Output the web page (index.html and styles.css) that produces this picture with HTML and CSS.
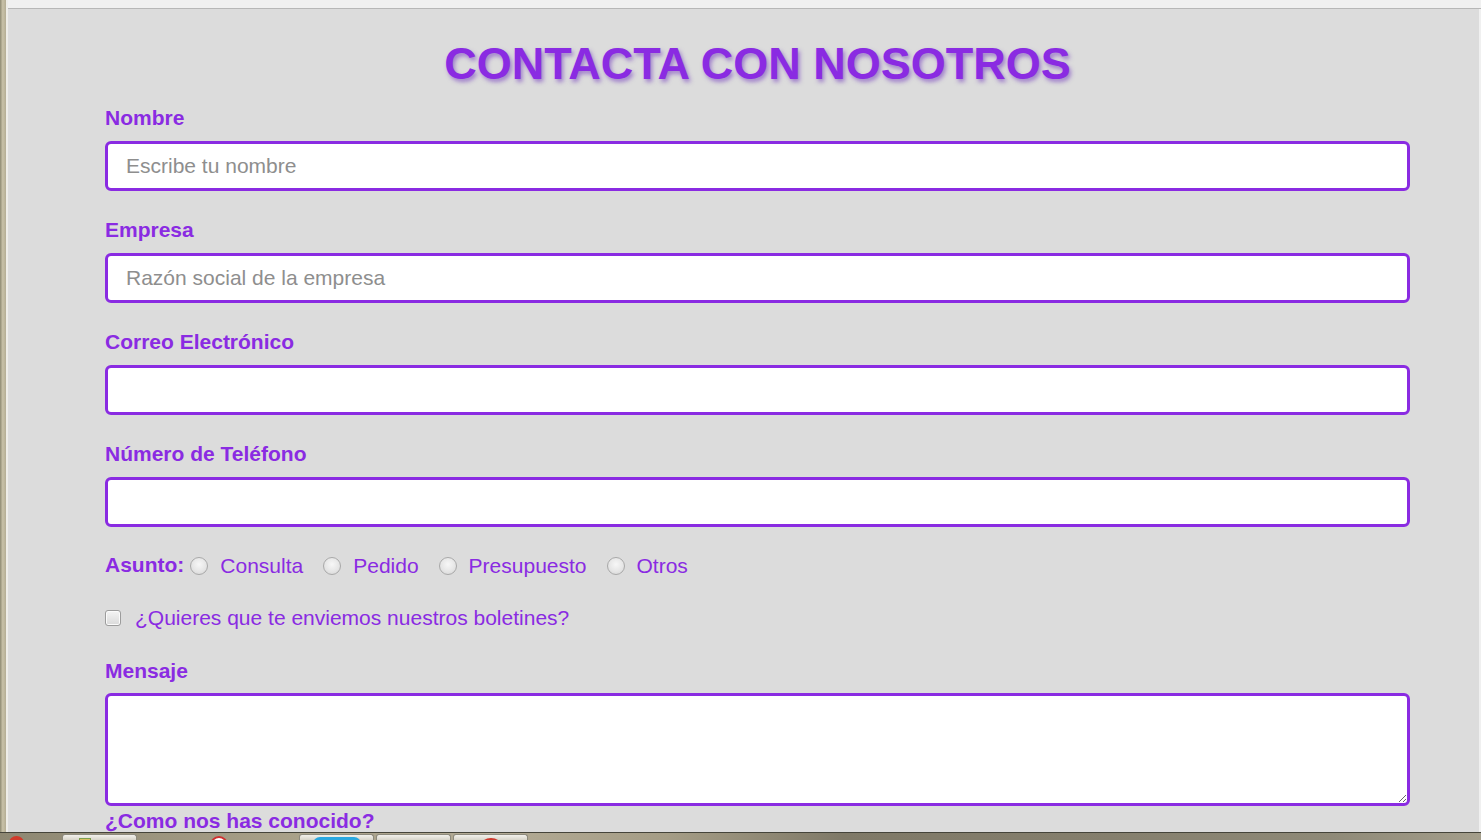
FILE: index.html
```html
<!DOCTYPE html>
<html lang="es">
<head>
<meta charset="utf-8">
<title>Contacta con nosotros</title>
<link rel="stylesheet" href="styles.css">
</head>
<body>
<div class="screen">
  <div class="desk-left"></div>
  <div class="window">
    <div class="chrome-top"></div>
    <div class="viewport">
      <div class="page">
        <form class="form">
          <h1 class="title">CONTACTA CON NOSOTROS</h1>

          <label class="field-label first" for="nombre">Nombre</label>
          <input class="text-input" id="nombre" type="text" placeholder="Escribe tu nombre">

          <label class="field-label" for="empresa">Empresa</label>
          <input class="text-input" id="empresa" type="text" placeholder="Razón social de la empresa">

          <label class="field-label" for="correo">Correo Electrónico</label>
          <input class="text-input" id="correo" type="email">

          <label class="field-label" for="tel">Número de Teléfono</label>
          <input class="text-input" id="tel" type="tel">

          <div class="radio-row">
            <span class="row-label">Asunto:</span>
            <label class="radio-item"><input class="radio" type="radio" name="asunto"><span class="opt-text">Consulta</span></label>
            <label class="radio-item"><input class="radio" type="radio" name="asunto"><span class="opt-text">Pedido</span></label>
            <label class="radio-item"><input class="radio" type="radio" name="asunto"><span class="opt-text">Presupuesto</span></label>
            <label class="radio-item"><input class="radio" type="radio" name="asunto"><span class="opt-text">Otros</span></label>
          </div>

          <label class="check-row"><input class="check" type="checkbox"><span class="check-text">¿Quieres que te enviemos nuestros boletines?</span></label>

          <label class="field-label msg" for="mensaje">Mensaje</label>
          <textarea class="text-area" id="mensaje"></textarea>

          <label class="field-label tail">¿Como nos has conocido?</label>
        </form>
      </div>
      <div class="scroll-edge"></div>
    </div>
  </div>
</div>
<div class="taskbar">
  <div class="tb-start"><span class="tb-icon red"></span></div>
  <div class="tb-btn"><span class="tb-icon folder"></span></div>
  <div class="tb-gap"><span class="tb-icon redwhite"></span></div>
  <div class="tb-btn"><span class="tb-icon blue"></span></div>
  <div class="tb-btn"></div>
  <div class="tb-btn"><span class="tb-icon red2"></span></div>
</div>
</body>
</html>
```
FILE: styles.css
```css
html, body {
  margin: 0;
  padding: 0;
}
body {
  width: 1481px;
  height: 840px;
  overflow: hidden;
  display: flex;
  flex-direction: column;
  font-family: "Liberation Sans", Arial, sans-serif;
  background: #dcdcdc;
}
.screen {
  height: 832px;
  display: flex;
  flex-direction: row;
}
.desk-left {
  width: 6px;
  background: linear-gradient(90deg, #8e8a72 0%, #c9c2a8 45%, #b4ad94 100%);
}
.window {
  flex: 1;
  display: flex;
  flex-direction: column;
  border-left: 2px solid #eeede8;
}
.chrome-top {
  height: 8px;
  background: #f0f0f0;
  border-bottom: 1px solid #b7b7b7;
}
.viewport {
  flex: 1;
  display: flex;
  flex-direction: row;
  overflow: hidden;
}
.page {
  flex: 1;
  background: #dcdcdc;
  padding-left: 97px;
  overflow: hidden;
}
.scroll-edge {
  width: 2px;
  background: #f0f0f0;
}
.form {
  width: 1305px;
  display: flex;
  flex-direction: column;
  align-items: flex-start;
}
.title {
  align-self: stretch;
  margin: 30px 0 0;
  height: 50px;
  line-height: 50px;
  text-align: center;
  font-size: 45px;
  font-weight: bold;
  color: #8a2be2;
  text-shadow: 2px 3px 4px rgba(110, 50, 190, 0.55);
}
.field-label {
  display: block;
  font-size: 21px;
  line-height: 24px;
  font-weight: bold;
  color: #8a2be2;
  margin-top: 27px;
  margin-bottom: 11px;
}
.field-label.first {
  margin-top: 17px;
}
.field-label.msg {
  margin-top: 29px;
  margin-bottom: 10px;
}
.field-label.tail {
  margin-top: 3px;
  margin-bottom: 0;
}
.text-input {
  box-sizing: border-box;
  width: 1305px;
  height: 50px;
  margin: 0;
  border: 3px solid #8a2be2;
  border-radius: 6px;
  padding: 0 18px;
  background: #fff;
  font-family: "Liberation Sans", Arial, sans-serif;
  font-size: 21px;
  color: #333;
  outline: none;
}
.text-input::placeholder {
  color: #8e8e8e;
}
.text-area {
  box-sizing: border-box;
  display: block;
  width: 1305px;
  height: 113px;
  margin: 0;
  border: 3px solid #8a2be2;
  border-radius: 6px;
  padding: 8px 18px;
  background: #fff;
  font-family: "Liberation Sans", Arial, sans-serif;
  font-size: 21px;
  outline: none;
}
.radio-row {
  margin-top: 27px;
  height: 24px;
  display: flex;
  flex-direction: row;
  align-items: center;
}
.row-label {
  font-size: 21px;
  line-height: 24px;
  font-weight: bold;
  color: #8a2be2;
  margin-right: 6px;
  margin-bottom: 3px;
}
.radio-item {
  display: flex;
  align-items: center;
  margin-right: 20px;
}
.radio {
  appearance: none;
  -webkit-appearance: none;
  width: 18px;
  height: 18px;
  margin: 0;
  border: 1px solid #a9a9a9;
  border-radius: 50%;
  background: radial-gradient(circle at 50% 40%, #f7f7f7 0%, #e6e6e6 55%, #d2d2d2 100%);
  box-sizing: border-box;
}
.opt-text {
  margin-left: 12px;
  font-size: 21px;
  line-height: 24px;
  color: #8a2be2;
}
.check-row {
  margin-top: 28px;
  height: 24px;
  display: flex;
  flex-direction: row;
  align-items: center;
}
.check {
  appearance: none;
  -webkit-appearance: none;
  width: 16px;
  height: 16px;
  margin: 0;
  border: 1px solid #9c9c9c;
  border-radius: 3px;
  box-sizing: border-box;
  background: linear-gradient(#f4f4f4, #dadada);
  box-shadow: inset 0 0 0 1px #fbfbfb;
}
.check-text {
  margin-left: 14px;
  font-size: 21px;
  line-height: 24px;
  color: #8a2be2;
}
.taskbar {
  height: 7px;
  border-top: 1px solid #45443a;
  display: flex;
  flex-direction: row;
  overflow: hidden;
  background: linear-gradient(90deg, #8d8772 0%, #a9a189 20%, #b3ab95 33%, #a59d86 45%, #7f7967 57%, #857f6d 75%, #8f8a78 90%, #a49e8b 100%);
}
.tb-start {
  width: 62px;
  display: flex;
  justify-content: flex-start;
  padding-left: 9px;
  box-sizing: border-box;
}
.tb-btn {
  width: 73px;
  margin-right: 2px;
  margin-top: 1px;
  background: linear-gradient(#f2f1ec, #d8d5ca);
  border: 1px solid #8d8a7c;
  border-bottom: none;
  border-radius: 3px 3px 0 0;
  display: flex;
  justify-content: center;
}
.tb-gap {
  width: 160px;
  display: flex;
  justify-content: center;
}
.tb-icon {
  display: block;
  margin-top: 3px;
  height: 14px;
}
.tb-icon.red {
  width: 15px;
  border-radius: 50%;
  background: #d03a2a;
}
.tb-icon.folder {
  width: 10px;
  margin-right: 30px;
  background: #d8c060;
  border: 1px solid #7ca050;
}
.tb-icon.redwhite {
  width: 14px;
  border-radius: 50%;
  background: #fff;
  border: 2px solid #d03030;
}
.tb-icon.blue {
  width: 48px;
  margin-top: 2px;
  border-radius: 7px 7px 0 0;
  background: #2aa8e0;
}
.tb-icon.red2 {
  width: 20px;
  border-radius: 50%;
  background: #cc3a2e;
}
```
